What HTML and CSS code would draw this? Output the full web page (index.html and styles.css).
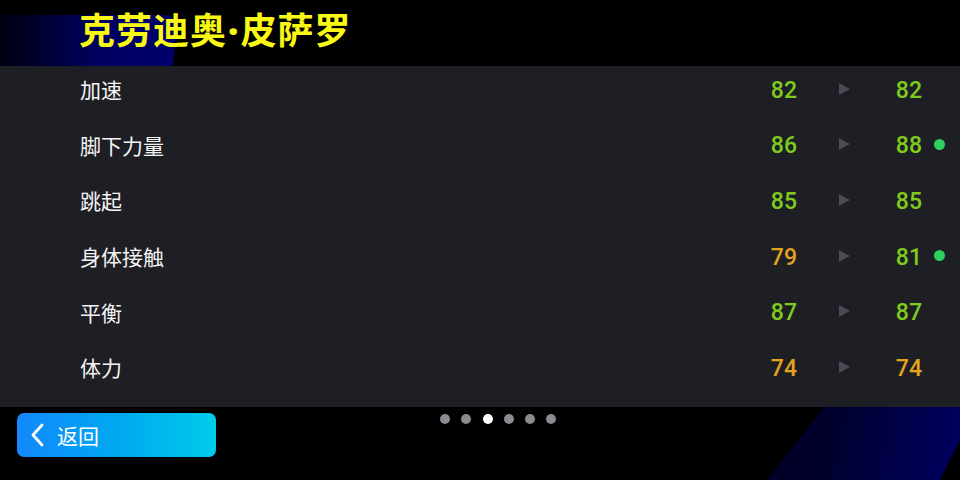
FILE: index.html
```html
<!DOCTYPE html>
<html lang="zh">
<head>
<meta charset="utf-8">
<link rel="stylesheet" href="styles.css">
</head>
<body>
<div class="screen">
  <div class="deco deco-left"></div>
  <div class="deco deco-right"></div>
  <header class="header">
    <h1 class="title">克劳迪奥<span class="sep">·</span>皮萨罗</h1>
  </header>
  <section class="panel">
    <div class="row"><span class="label">加速</span><span class="num green">82</span><span class="arrow"></span><span class="num green">82</span><span class="mark"></span></div>
    <div class="row"><span class="label">脚下力量</span><span class="num green">86</span><span class="arrow"></span><span class="num green">88</span><span class="mark on"></span></div>
    <div class="row"><span class="label">跳起</span><span class="num green">85</span><span class="arrow"></span><span class="num green">85</span><span class="mark"></span></div>
    <div class="row"><span class="label">身体接触</span><span class="num orange">79</span><span class="arrow"></span><span class="num green">81</span><span class="mark on"></span></div>
    <div class="row"><span class="label">平衡</span><span class="num green">87</span><span class="arrow"></span><span class="num green">87</span><span class="mark"></span></div>
    <div class="row"><span class="label">体力</span><span class="num orange">74</span><span class="arrow"></span><span class="num orange">74</span><span class="mark"></span></div>
  </section>
  <footer class="footer">
    <button class="back">
      <svg class="chev" width="15" height="24" viewBox="0 0 15 24"><path d="M12 2 L3 12 L12 22" fill="none" stroke="#fff" stroke-width="2.8" stroke-linecap="round" stroke-linejoin="round"/></svg>
      <span>返回</span>
    </button>
    <div class="dots">
      <span class="dot"></span><span class="dot"></span><span class="dot active"></span><span class="dot"></span><span class="dot"></span><span class="dot"></span>
    </div>
  </footer>
</div>
</body>
</html>
```
FILE: styles.css
```css
html, body {
  margin: 0;
  padding: 0;
  background: #000;
}
.screen {
  position: relative;
  width: 960px;
  height: 480px;
  overflow: hidden;
  background: #000;
  font-family: "Noto Sans CJK SC", "Noto Sans", sans-serif;
}
.deco {
  position: absolute;
  z-index: 0;
}
.deco-left {
  left: 0;
  top: 15px;
  width: 178px;
  height: 52px;
  background: linear-gradient(90deg, #000010 0%, #000060 55%, #00006e 100%);
  clip-path: polygon(0 0, 100% 0, 97% 100%, 0 100%);
  border-top-right-radius: 14px;
}
.deco-right {
  left: 760px;
  top: 406px;
  width: 200px;
  height: 74px;
  background: linear-gradient(100deg, #000026 0%, #00002c 35%, #00004a 70%, #000062 100%);
  clip-path: polygon(32.5% 0, 100% 0, 100% 46%, 90% 100%, 3.5% 100%);
}
.header {
  position: relative;
  z-index: 1;
  height: 66px;
  padding-left: 79px;
  display: flex;
  align-items: center;
  box-sizing: border-box;
  padding-bottom: 7px;
}
.title {
  margin: 0;
  font-size: 36px;
  font-weight: 700;
  color: #f8f814;
  line-height: 1;
  letter-spacing: 1px;
}
.sep {
  font-family: "Noto Sans", sans-serif;
  font-weight: 900;
  margin: 0 1px;
}
.panel {
  position: relative;
  z-index: 1;
  height: 341px;
  background: #1e1f24;
  box-sizing: border-box;
}
.row {
  height: 55.6px;
  box-sizing: border-box;
  padding: 0 0 8px 80px;
  display: grid;
  grid-template-columns: 1fr 60px 65px 60px 38px;
  align-items: center;
}
.label {
  font-size: 21px;
  color: #f4f4f4;
  line-height: 1;
}
.num {
  text-align: right;
  font-family: "Roboto", sans-serif;
  font-size: 23px;
  font-weight: 500;
  line-height: 1;
  margin-top: 1px;
}
.green { color: #7ecb1d; }
.orange { color: #e3a31c; }
.arrow {
  justify-self: start;
  margin-left: 42px;
  margin-top: -2px;
  width: 0;
  height: 0;
  border-top: 6px solid transparent;
  border-bottom: 6px solid transparent;
  border-left: 11px solid #4a4b55;
}
.mark {
  justify-self: start;
  margin-left: 12px;
  margin-top: -2px;
  width: 11px;
  height: 11px;
  border-radius: 50%;
}
.mark.on { background: #2fcf5e; }
.footer {
  position: relative;
  z-index: 1;
  display: flex;
  align-items: flex-start;
  padding: 6px 0 0 17px;
}
.back {
  width: 199px;
  height: 44px;
  border: 0;
  border-radius: 7px;
  background: linear-gradient(90deg, #1388fc 0%, #00a8f0 50%, #00cbeb 100%);
  display: flex;
  align-items: center;
  padding: 0 0 0 13px;
  color: #fff;
  font-family: "Noto Sans CJK SC", sans-serif;
  font-size: 21px;
  gap: 12px;
}
.chev { display: block; }
.dots {
  display: flex;
  gap: 11.3px;
  margin-left: 224px;
  margin-top: 1px;
}
.dot {
  width: 10px;
  height: 10px;
  border-radius: 50%;
  background: #8a8a90;
}
.dot.active { background: #fff; }
```
